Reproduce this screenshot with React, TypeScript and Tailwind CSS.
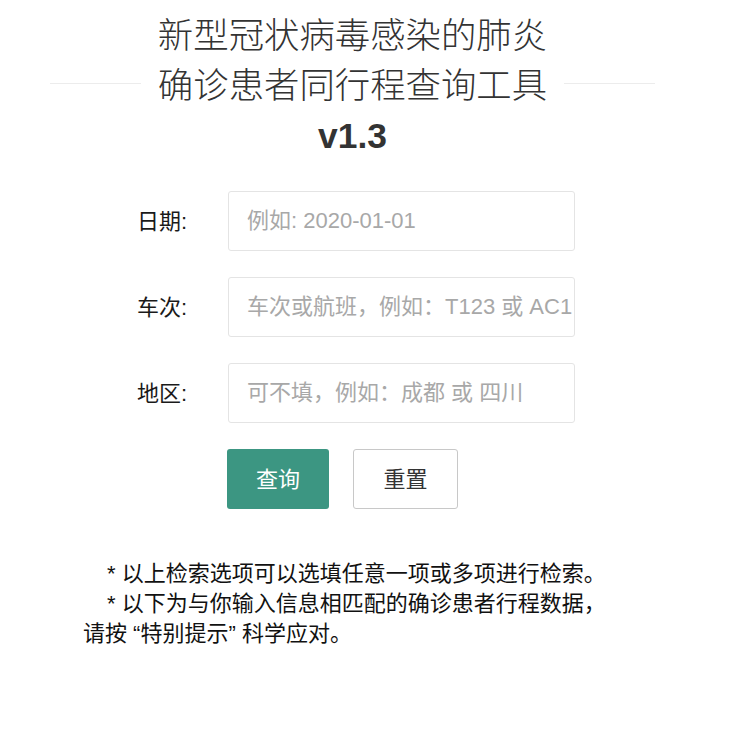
import { useState } from 'react'

const font = { fontFamily: '"Liberation Sans", "Noto Sans CJK SC", sans-serif' }

export default function App() {
  const [date, setDate] = useState('')
  const [train, setTrain] = useState('')
  const [area, setArea] = useState('')

  const reset = () => {
    setDate('')
    setTrain('')
    setArea('')
  }

  const fields = [
    { label: '日期:', value: date, set: setDate, placeholder: '例如: 2020-01-01' },
    { label: '车次:', value: train, set: setTrain, placeholder: '车次或航班，例如：T123 或 AC123' },
    { label: '地区:', value: area, set: setArea, placeholder: '可不填，例如：成都 或 四川' }
  ]

  return (
    <div className="min-h-screen bg-white pt-[11px]" style={font}>
      {/* Title with side rules */}
      <div className="ml-[50px] w-[605px] flex items-center">
        <div className="flex-1 h-px bg-[#ececec] mt-[-6px]" />
        <h1 className="mx-[17px] text-center text-[35.4px] leading-[50px] font-light text-[#333]">
          新型冠状病毒感染的肺炎
          <br />
          确诊患者同行程查询工具
          <br />
          <span className="font-bold">v1.3</span>
        </h1>
        <div className="flex-1 h-px bg-[#ececec] mt-[-6px]" />
      </div>

      {/* Form */}
      <div className="mt-[30px] flex flex-col gap-[26px]">
        {fields.map((f) => (
          <div key={f.label} className="flex items-center">
            <label className="pl-[137px] w-[228px] text-[22px] text-[#1a1a1a]">{f.label}</label>
            <input
              value={f.value}
              onChange={(e) => f.set(e.target.value)}
              placeholder={f.placeholder}
              className="w-[347px] h-[60px] border border-[#e4e4e4] rounded-[3px] pl-[18px] pr-[2px] text-[22px] text-[#333] placeholder:text-[#a8a8a8] outline-none"
              style={font}
            />
          </div>
        ))}
      </div>

      {/* Buttons */}
      <div className="mt-[26px] ml-[227px] flex gap-[24px]">
        <button className="w-[102px] h-[60px] rounded-[3px] bg-[#3c9682] text-white text-[22px]">
          查询
        </button>
        <button
          onClick={reset}
          className="w-[105px] h-[60px] rounded-[3px] border border-[#c8c8c8] bg-white text-[#333] text-[22px]"
        >
          重置
        </button>
      </div>

      {/* Notes */}
      <div className="mt-[50px] ml-[83px] w-[532px] text-[22px] leading-[30px] text-[#111]">
        <p className="indent-[24px]">* 以上检索选项可以选填任意一项或多项进行检索。</p>
        <p className="indent-[24px]">* 以下为与你输入信息相匹配的确诊患者行程数据，请按 “特别提示” 科学应对。</p>
      </div>
    </div>
  )
}
